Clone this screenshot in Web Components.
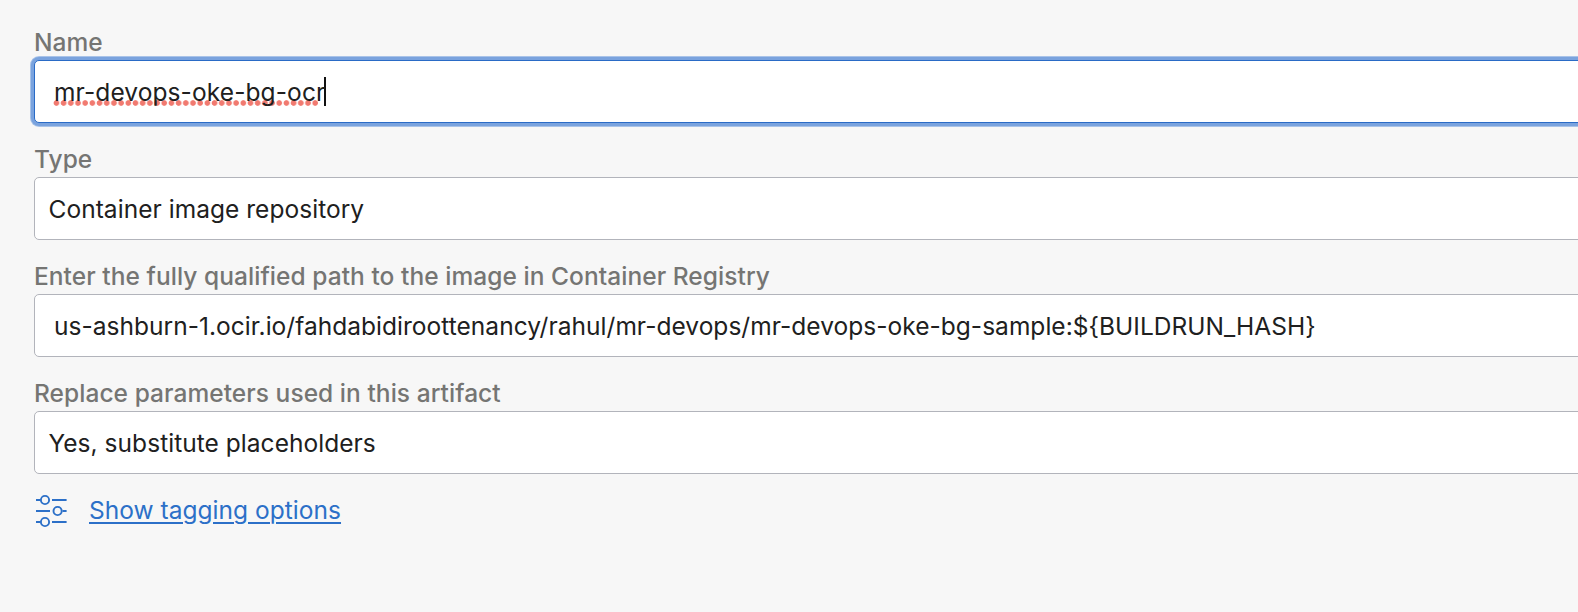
<!DOCTYPE html>
<html lang="en">
<head>
<meta charset="utf-8">
<title>Artifact</title>
<style>
body{margin:0;background:#f7f7f7;overflow:hidden;font-family:Inter,"Liberation Sans",sans-serif}
</style>
</head>
<body>
<artifact-form>
  <form-field label="Name" active style="--pad:19px;--track:.1px"><misspelled-text>mr-devops-oke-bg-ocr</misspelled-text><text-caret></text-caret></form-field>
  <form-field label="Type">Container image repository</form-field>
  <form-field label="Enter the fully qualified path to the image in Container Registry" style="--pad:19px;--track:.03px">us-ashburn-1.ocir.io/fahdabidiroottenancy/rahul/mr-devops/mr-devops-oke-bg-sample:${BUILDRUN_HASH}</form-field>
  <form-field label="Replace parameters used in this artifact">Yes, substitute placeholders</form-field>
  <tagging-link>Show tagging options</tagging-link>
</artifact-form>
<script>
const define = (name, html, setup) => customElements.define(name, class extends HTMLElement {
  connectedCallback() {
    if (this.shadowRoot) return;
    this.attachShadow({mode: 'open'}).innerHTML = html;
    if (setup) setup(this);
  }
});

define('artifact-form', `<style>
:host{display:flex;flex-direction:column;box-sizing:border-box;width:1578px;height:612px;padding:26px 0 0 34px;overflow:hidden;background:#f7f7f7}
</style><slot></slot>`);

define('form-field', `<style>
:host{display:grid;grid-template-rows:34px 63px;height:117px;width:1600px;flex:none}
.label{font-weight:500;font-size:24.5px;line-height:32px;letter-spacing:.05px;color:#757573;white-space:nowrap}
.box{display:flex;align-items:center;box-sizing:border-box;height:63px;border:1px solid #b2b4bb;border-radius:5px;background:#fff;color:#202020;font-size:24.5px;line-height:32px;letter-spacing:var(--track,.04px);white-space:nowrap;padding:0 0 0 var(--pad,13.5px)}
:host([active]) .box{border-color:#2a6bc6;box-shadow:0 0 0 3px #7aa3de,0 0 0 4px #a9c3e8}
</style><div class="label"></div><div class="box"><slot></slot></div>`,
  el => { el.shadowRoot.querySelector('.label').textContent = el.getAttribute('label'); });

define('misspelled-text', `<style>
:host{display:block;position:relative}
i{position:absolute;left:-1px;top:24px;width:266px;height:6px;background:radial-gradient(circle at 3.4px 3px,#f17a70 2.4px,transparent 3.2px) 0 0/7.2px 6px repeat-x}
span{position:relative}
</style><i></i><span><slot></slot></span>`);

define('text-caret', `<style>:host{display:block;width:2px;height:29px;margin-left:-1px;background:#111}</style>`);

define('tagging-link', `<style>
:host{display:flex;align-items:center;height:36px;margin-top:-1px;gap:20px;color:#2c70c8;font-size:24.5px;line-height:32px;letter-spacing:.03px}
svg{display:block;flex:none}
a{color:inherit;margin-top:-2px;text-decoration:underline;text-decoration-thickness:2px;text-underline-offset:3px;text-decoration-skip-ink:auto}
</style><svg width="35" height="36" viewBox="0 0 35 36" fill="none" stroke="currentColor" stroke-width="1.9"><path d="M2 7h4.5M18 7h14.6M2 18h14M28.5 18h4.1M2 29h4.5M18 29h14.6"/><circle cx="11" cy="7" r="4.1"/><circle cx="23.6" cy="18" r="4.1"/><circle cx="11" cy="29" r="4.1"/></svg><a><slot></slot></a>`);
</script>
</body>
</html>
